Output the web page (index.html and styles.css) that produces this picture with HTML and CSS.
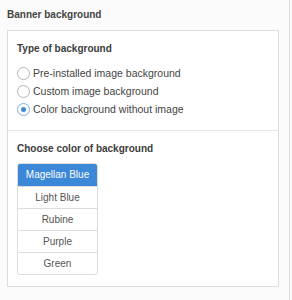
FILE: index.html
```html
<!DOCTYPE html>
<html lang="en">
<head>
    <meta charset="UTF-8">
    <meta name="viewport" content="width=device-width, initial-scale=1.0">
    <title>Banner background</title>
    <link rel="stylesheet" href="styles.css">
</head>
<body>
    <div class="sidebar">
        <h2 class="title">Banner background</h2>

        <div class="panel">
            <div class="section">
                <h3>Type of background</h3>
                <label class="radio-row">
                    <span class="radio"></span>
                    Pre-installed image background
                </label>
                <label class="radio-row">
                    <span class="radio"></span>
                    Custom image background
                </label>
                <label class="radio-row">
                    <span class="radio checked"></span>
                    Color background without image
                </label>
            </div>

            <div class="section section-colors">
                <h3>Choose color of background</h3>
                <ul class="color-list">
                    <li class="active">Magellan Blue</li>
                    <li>Light Blue</li>
                    <li>Rubine</li>
                    <li>Purple</li>
                    <li>Green</li>
                </ul>
            </div>
        </div>
    </div>
</body>
</html>
```

FILE: styles.css
```css
* {
    margin: 0;
    padding: 0;
    box-sizing: border-box;
    font-family: 'Liberation Sans', Arial, sans-serif;
}

body {
    background: #fbfbfb;
}

.sidebar {
    width: 290px;
    height: 300px;
    border-right: 1px solid #dcdcdc;
    padding: 8px 0 0 7px;
}

.title {
    font-size: 10px;
    line-height: 14px;
    font-weight: bold;
    color: #444;
}

.panel {
    width: 272px;
    margin-top: 8px;
    background: #fff;
    border: 1px solid #dcdcdc;
}

.section {
    padding: 11px 9px 12px;
}

.section h3 {
    font-size: 10px;
    line-height: 14px;
    font-weight: bold;
    color: #3c3c3c;
    margin-bottom: 8px;
}

.radio-row {
    display: flex;
    align-items: center;
    gap: 3px;
    height: 18px;
    font-size: 10.5px;
    color: #444;
}

.radio {
    width: 13px;
    height: 13px;
    border: 1px solid #b4b4b4;
    border-radius: 50%;
    background: #fff;
    display: flex;
    align-items: center;
    justify-content: center;
}

.radio.checked {
    border-color: #7fb0e0;
}

.radio.checked::after {
    content: "";
    width: 5px;
    height: 5px;
    border-radius: 50%;
    background: #3b88d8;
}

.section-colors {
    border-top: 1px solid #e6e6e6;
    padding-bottom: 11px;
}

.section-colors h3 {
    margin-bottom: 7px;
}

.color-list {
    list-style: none;
    width: 81px;
    border: 1px solid #dcdcdc;
    border-radius: 3px;
    overflow: hidden;
}

.color-list li {
    height: 22px;
    line-height: 21px;
    text-align: center;
    font-size: 10px;
    color: #555;
    border-top: 1px solid #dcdcdc;
}

.color-list li:first-child {
    border-top: none;
}

.color-list li.active {
    background: #3b88d8;
    color: #fff;
}
```
